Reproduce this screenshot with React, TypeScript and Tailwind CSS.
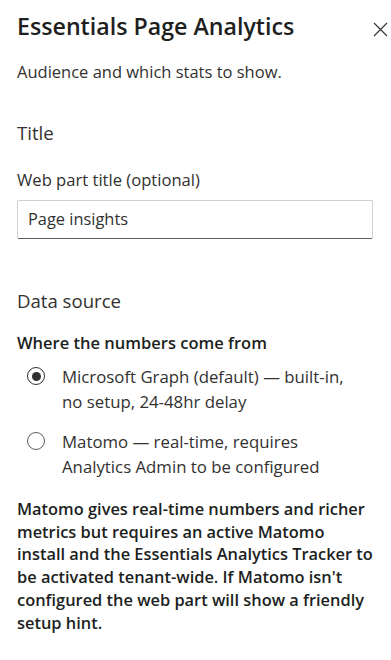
export default function App(){

return(

<div className="w-[391px] h-[660px] overflow-hidden bg-white text-[#323130] font-['Open_Sans',sans-serif]">

{/* HEADER */}

<div className="flex items-start justify-between pl-[17px] pr-[3px] pt-[10px]">

<h1 className="text-[23.2px] leading-[32px] font-semibold text-[#201f1e]">
Essentials Page Analytics
</h1>

<svg width="15" height="15" viewBox="0 0 15 15" className="mt-[12px]">
<path d="M1 1L14 14M14 1L1 14" stroke="#323130" strokeWidth="1.1" fill="none"/>
</svg>

</div>

<div className="px-[17px]">

<p className="mt-[19px] text-[16.5px] leading-[22px]">
Audience and which stats to show.
</p>

{/* TITLE GROUP */}

<h2 className="mt-[36px] text-[18.6px] leading-[28px]">
Title
</h2>

<label className="block mt-[22px] text-[16.6px] leading-[22px]">
Web part title (optional)
</label>

<div className="mt-[9px] h-[39px] w-[356px] flex items-center px-[10px] border border-[#d2d0ce] border-b-[#605e5c] rounded-[2px] text-[16.4px]">
Page insights
</div>

{/* DATA SOURCE */}

<h2 className="mt-[48px] text-[18.6px] leading-[28px]">
Data source
</h2>

<p className="mt-[17px] text-[16.5px] leading-[22px] font-semibold text-[#201f1e]">
Where the numbers come from
</p>

<div className="mt-[10px] flex flex-col gap-[15px]">

<div className="flex items-start">
<div className="ml-[10px] mt-[3px] w-[18px] h-[18px] rounded-full border-[1.5px] border-[#323130] flex items-center justify-center">
<div className="w-[9px] h-[9px] rounded-full bg-[#323130]"/>
</div>
<p className="ml-[17px] text-[16.8px] leading-[25px]">
Microsoft Graph (default) — built-in,<br/>no setup, 24-48hr delay
</p>
</div>

<div className="flex items-start">
<div className="ml-[10px] mt-[3px] w-[18px] h-[18px] rounded-full border-[1.5px] border-[#605e5c]"/>
<p className="ml-[17px] text-[16.8px] leading-[25px]">
Matomo — real-time, requires<br/>Analytics Admin to be configured
</p>
</div>

</div>

<p className="mt-[19px] text-[16.4px] leading-[22.7px] font-semibold text-[#201f1e]">
Matomo gives real-time numbers and richer metrics but requires an active Matomo install and the Essentials Analytics Tracker to be activated tenant-wide. If Matomo isn't configured the web part will show a friendly setup hint.
</p>

</div>

</div>

)
}
